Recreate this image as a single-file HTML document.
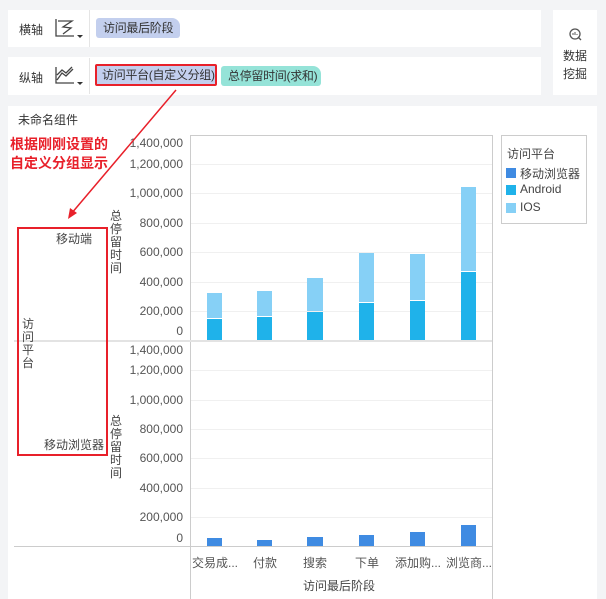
<!DOCTYPE html><html><head><meta charset="utf-8"><style>
*{margin:0;padding:0;box-sizing:border-box}
body{width:606px;height:599px;background:#f3f4f6;position:relative;overflow:hidden;font-family:"Liberation Sans","Noto Sans CJK SC",sans-serif;color:#333}
.a{position:absolute}
.p{background:#fff}
.t{font-size:12px;white-space:nowrap}
.y{font-size:12px;color:#555;text-align:right;width:80px;line-height:12px}
.pill{height:20px;line-height:20px;font-size:12px;padding-left:7px;border-radius:3px 8px 3px 3px;white-space:nowrap;overflow:hidden;letter-spacing:-0.3px}
.v{font-size:12px;width:14px;line-height:13px;text-align:center;color:#444}
.g{height:1px;background:#f0f0f0;left:191px;width:301px}
.c{font-size:12px;color:#555;width:50px;text-align:center}
</style></head><body>
<div class="a p" style="left:8px;top:10px;width:533px;height:37px"></div>
<div class="a p" style="left:8px;top:57px;width:533px;height:38px"></div>
<div class="a p" style="left:553px;top:10px;width:44px;height:85px"></div>
<div class="a p" style="left:8px;top:106px;width:589px;height:493px"></div>
<div class="a t" style="left:19px;top:21px">横轴</div>
<div class="a t" style="left:19px;top:69px">纵轴</div>
<svg class="a" style="left:54px;top:16px" width="40" height="80" viewBox="0 0 40 80"><path d="M2 3V20H20M4 5H18L9 11L17 12L9 18" fill="none" stroke="#444" stroke-width="1.3"/><path d="M23 19l3 3l3-3z" fill="#333"/><path d="M2 51V67H20M3 64L8 57L12 60L19 53M3 59L8 54L12 57L18 51" fill="none" stroke="#444" stroke-width="1.3"/><path d="M23 66l3 3l3-3z" fill="#333"/></svg>
<div class="a" style="left:89px;top:10px;width:1px;height:37px;background:#e5e5e5"></div>
<div class="a" style="left:89px;top:58px;width:1px;height:36px;background:#e5e5e5"></div>
<div class="a pill" style="left:96px;top:18px;width:84px;background:#c3cfee">访问最后阶段</div>
<div class="a pill" style="left:95px;top:64px;width:122px;height:22px;background:#c3cfee;border:2px solid #e8202a;border-radius:2px;line-height:18px;padding-left:5px">访问平台(自定义分组)</div>
<div class="a pill" style="left:221px;top:66px;width:100px;background:#95e3d8">总停留时间(求和)</div>
<svg class="a" style="left:568px;top:27px" width="14" height="14"><circle cx="7" cy="7" r="5" fill="none" stroke="#555" stroke-width="1.3"/><path d="M5 8v-2M7 8v-3M9 8v-1" stroke="#555"/><path d="M10 10l3 3" stroke="#555" stroke-width="1.3"/></svg>
<div class="a t" style="left:563px;top:47px;line-height:18px;font-size:12px">数据<br>挖掘</div>
<div class="a t" style="left:18px;top:111px">未命名组件</div>
<div class="a" style="left:10px;top:135px;font-size:14px;font-weight:bold;color:#e8202a;line-height:19px;white-space:nowrap">根据刚刚设置的<br>自定义分组显示</div>
<div class="a" style="left:14px;top:546px;width:478px;height:1px;background:#ccc"></div>
<div class="a" style="left:190px;top:135px;width:1px;height:464px;background:#ccc"></div>
<div class="a" style="left:492px;top:135px;width:1px;height:464px;background:#ccc"></div>
<div class="a" style="left:190px;top:135px;width:302px;height:1px;background:#ccc"></div>
<div class="a" style="left:14px;top:340px;width:478px;height:2px;background:#e3e3e3"></div>
<div class="a g" style="top:164px"></div><div class="a g" style="top:193px"></div><div class="a g" style="top:223px"></div><div class="a g" style="top:252px"></div><div class="a g" style="top:282px"></div><div class="a g" style="top:311px"></div>
<div class="a g" style="top:370px"></div><div class="a g" style="top:400px"></div><div class="a g" style="top:429px"></div><div class="a g" style="top:458px"></div><div class="a g" style="top:488px"></div><div class="a g" style="top:517px"></div>
<div class="a y" style="left:103px;top:137px">1,400,000</div><div class="a y" style="left:103px;top:158px">1,200,000</div><div class="a y" style="left:103px;top:187px">1,000,000</div><div class="a y" style="left:103px;top:217px">800,000</div><div class="a y" style="left:103px;top:246px">600,000</div><div class="a y" style="left:103px;top:276px">400,000</div><div class="a y" style="left:103px;top:305px">200,000</div><div class="a y" style="left:103px;top:325px">0</div>
<div class="a y" style="left:103px;top:344px">1,400,000</div><div class="a y" style="left:103px;top:364px">1,200,000</div><div class="a y" style="left:103px;top:394px">1,000,000</div><div class="a y" style="left:103px;top:423px">800,000</div><div class="a y" style="left:103px;top:452px">600,000</div><div class="a y" style="left:103px;top:482px">400,000</div><div class="a y" style="left:103px;top:511px">200,000</div><div class="a y" style="left:103px;top:532px">0</div>
<div class="a v" style="left:109px;top:210px">总停留时间</div>
<div class="a v" style="left:109px;top:415px">总停留时间</div>
<div class="a v" style="left:21px;top:318px">访问平台</div>
<div class="a t" style="left:56px;top:230px;color:#444">移动端</div>
<div class="a t" style="left:44px;top:436px;color:#444">移动浏览器</div>
<div class="a" style="left:17px;top:227px;width:91px;height:229px;border:2px solid #e8202a"></div>
<svg class="a" style="left:0;top:0" width="606" height="599"><path d="M176 90L71 214" stroke="#e8202a" stroke-width="1.5"/><path d="M68 219l2-11l7 5z" fill="#e8202a"/>
<g fill="#86d0f6"><rect x="207" y="293" width="15" height="25"/><rect x="257" y="291" width="15" height="25"/><rect x="307" y="278" width="16" height="33"/><rect x="359" y="253" width="15" height="49"/><rect x="410" y="254" width="15" height="46"/><rect x="461" y="187" width="15" height="84"/></g>
<g fill="#1fb2ea"><rect x="207" y="319" width="15" height="21"/><rect x="257" y="317" width="15" height="23"/><rect x="307" y="312" width="16" height="28"/><rect x="359" y="303" width="15" height="37"/><rect x="410" y="301" width="15" height="39"/><rect x="461" y="272" width="15" height="68"/></g>
<g fill="#3f8be2"><rect x="207" y="538" width="15" height="8"/><rect x="257" y="540" width="15" height="6"/><rect x="307" y="537" width="16" height="9"/><rect x="359" y="535" width="15" height="11"/><rect x="410" y="532" width="15" height="14"/><rect x="461" y="525" width="15" height="21"/></g></svg>
<div class="a c" style="left:190px;top:554px">交易成...</div><div class="a c" style="left:240px;top:554px">付款</div><div class="a c" style="left:290px;top:554px">搜索</div><div class="a c" style="left:342px;top:554px">下单</div><div class="a c" style="left:393px;top:554px">添加购...</div><div class="a c" style="left:444px;top:554px">浏览商...</div>
<div class="a t" style="left:303px;top:577px;color:#444">访问最后阶段</div>
<div class="a" style="left:501px;top:135px;width:86px;height:89px;border:1px solid #ccc"></div>
<div class="a t" style="left:507px;top:145px;color:#444">访问平台</div>
<div class="a" style="left:506px;top:168px;width:10px;height:10px;background:#3f8be2"></div><div class="a t" style="left:520px;top:165px;color:#444">移动浏览器</div>
<div class="a" style="left:506px;top:185px;width:10px;height:10px;background:#1fb2ea"></div><div class="a t" style="left:520px;top:182px;color:#444">Android</div>
<div class="a" style="left:506px;top:203px;width:10px;height:10px;background:#86d0f6"></div><div class="a t" style="left:520px;top:200px;color:#444">IOS</div>
</body></html>
